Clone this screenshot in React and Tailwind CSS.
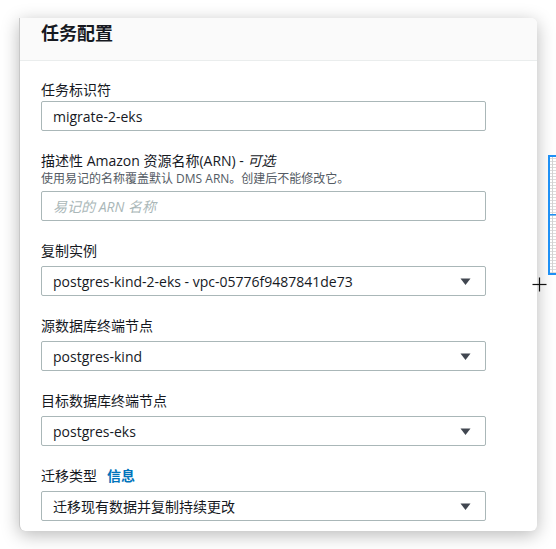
import React from "react";

const FONT = { fontFamily: '"Open Sans", "Noto Sans CJK SC", sans-serif' };

function Caret() {
  return (
    <svg width="11" height="7" viewBox="0 0 11 7" className="shrink-0">
      <path d="M0.5 0.5 H10.5 L5.5 7 Z" fill="#414750" />
    </svg>
  );
}

function Label({ children, className = "" }) {
  return (
    <div className={`text-[14px] leading-[20px] text-[#16191f] ${className}`}>
      {children}
    </div>
  );
}

function TextInput({ value, placeholder }) {
  return (
    <div className="h-[30px] w-[445px] border border-[#aab7b8] rounded-[2px] bg-white flex items-center pl-[11px] text-[14px]">
      {value ? (
        <span className="text-[#16191f]">{value}</span>
      ) : (
        <span className="text-[#aab7b8] italic">{placeholder}</span>
      )}
    </div>
  );
}

function Select({ value }) {
  return (
    <div className="h-[30px] w-[445px] border border-[#aab7b8] rounded-[2px] bg-white flex items-center justify-between pl-[11px] pr-[14px] text-[14px] text-[#16191f]">
      <span>{value}</span>
      <Caret />
    </div>
  );
}

export default function App() {
  return (
    <div
      className="relative w-[556px] h-[549px] bg-white overflow-hidden"
      style={FONT}
    >
      <div className="ml-[19px] mt-[18px] w-[518px] bg-white rounded-tr-[6px] rounded-b-[6px] border-l border-[#c8c8c8] shadow-[0_4px_18px_rgba(0,0,0,0.28)]">
        <div className="h-[43px] bg-[#fafafa] border-b border-[#eaeded] rounded-tr-[6px] px-[21px] pt-[4px]">
          <div className="text-[18px] leading-[22px] font-bold text-[#16191f]">
            任务配置
          </div>
        </div>
        <div className="px-[21px] pt-[19px] pb-[10px] flex flex-col gap-[20px]">
          <div>
            <Label className="mb-[1px]">任务标识符</Label>
            <TextInput value="migrate-2-eks" />
          </div>
          <div>
            <Label>
              描述性 Amazon 资源名称(ARN) - <i>可选</i>
            </Label>
            <div className="text-[12px] leading-[15px] text-[#545b64] mb-[5px]">
              使用易记的名称覆盖默认 DMS ARN。创建后不能修改它。
            </div>
            <TextInput placeholder="易记的 ARN 名称" />
          </div>
          <div>
            <Label className="mb-[5px]">复制实例</Label>
            <Select value="postgres-kind-2-eks - vpc-05776f9487841de73" />
          </div>
          <div>
            <Label className="mb-[5px]">源数据库终端节点</Label>
            <Select value="postgres-kind" />
          </div>
          <div>
            <Label className="mb-[5px]">目标数据库终端节点</Label>
            <Select value="postgres-eks" />
          </div>
          <div>
            <Label className="mb-[5px] flex">
              <span>迁移类型</span>
              <span className="ml-[10px] font-bold text-[#0073bb]">信息</span>
            </Label>
            <Select value="迁移现有数据并复制持续更改" />
          </div>
        </div>
      </div>

      {/* blue grid widget at right edge */}
      <svg
        className="absolute left-[548px] top-[155px]"
        width="8"
        height="120"
        viewBox="0 0 8 120"
      >
        <rect x="0" y="0" width="8" height="120" fill="#ffffff" />
        {Array.from({ length: 40 }).map((_, i) => (
          <rect key={i} x="2" y={3 + i * 3} width="6" height="1" fill="#dcdcdc" />
        ))}
        <rect x="4" y="2" width="1" height="116" fill="#d2d2d2" />
        <rect x="0" y="0" width="2" height="120" fill="#1e90f5" />
        <rect x="0" y="0" width="8" height="2" fill="#1e90f5" />
        <rect x="0" y="118" width="8" height="2" fill="#1e90f5" />
        <rect x="0" y="59" width="8" height="1.5" fill="#1e90f5" />
      </svg>

      {/* crosshair cursor */}
      <svg
        className="absolute left-[532px] top-[277px]"
        width="15"
        height="15"
        viewBox="0 0 15 15"
      >
        <line x1="7.5" y1="0.5" x2="7.5" y2="14.5" stroke="#111" strokeWidth="1.2" />
        <line x1="0.5" y1="7.5" x2="14.5" y2="7.5" stroke="#111" strokeWidth="1.2" />
      </svg>
    </div>
  );
}
